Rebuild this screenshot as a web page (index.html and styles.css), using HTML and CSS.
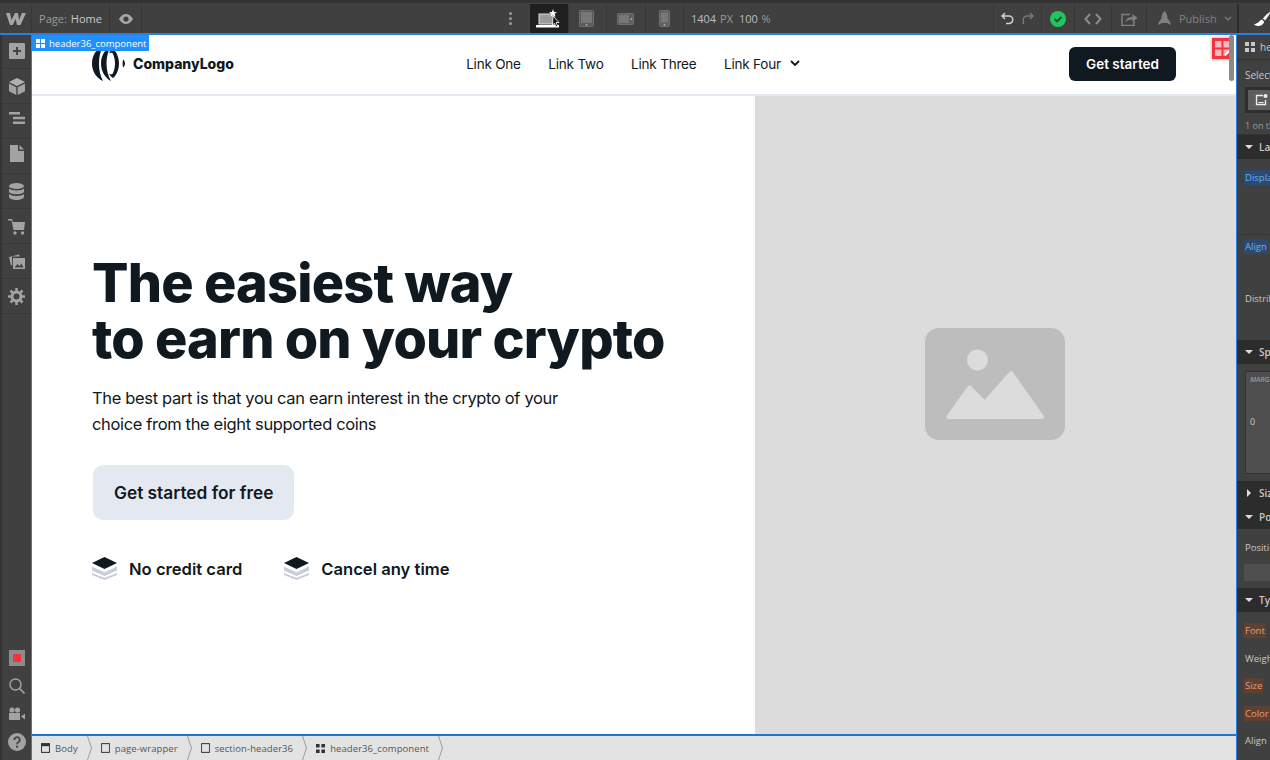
FILE: index.html
```html
<!DOCTYPE html>
<html lang="en">
<head>
  <meta charset="UTF-8" />
  <title>Webflow Designer</title>
  <link rel="stylesheet" href="styles.css">
</head>
<body>
  <div class="app">
    <header class="topbar">
      <div class="tb-cell tb-logo">
        <svg width="20" height="14" viewBox="0 0 20 14"><path d="M0 1h4l1.500 7L9 1h3l1 7 3-7h4l-5.500 12h-3.500l-1.300-6-3 6H4z" fill="#a6a6a6"/></svg>
      </div>
      <div class="tb-cell tb-page"><span class="dim">Page:</span> <span>Home</span></div>
      <div class="tb-cell tb-eye">
        <svg width="14" height="10" viewBox="0 0 14 10"><path fill-rule="evenodd" d="M0 5c2-3.300 4.300-5 7-5s5 1.700 7 5c-2 3.300-4.300 5-7 5S2 8.300 0 5zm7 2.600a2.600 2.600 0 1 0 0-5.200 2.600 2.600 0 0 0 0 5.200z" fill="#a6a6a6"/></svg>
      </div>
      <div class="tb-spacer tb-left"></div>
      <div class="tb-dots"><i></i><i></i><i></i></div>
      <div class="tb-device active">
        <svg width="26" height="20" viewBox="0 0 26 20"><rect x="3" y="5" width="15" height="10" fill="#9a9a9a" stroke="#ddd"/><rect x="0" y="16" width="23" height="2.500" fill="#fff"/><path d="M17 0l1 3h3l-2.400 1.800 1 3L17 6l-2.600 1.800 1-3L13 3h3z" fill="#fff"/><path d="M17 7l6 6.500h-3l1.600 3.500-1.600.7-1.600-3.500-2 2z" fill="#111" stroke="#fff" stroke-width=".8"/></svg>
      </div>
      <div class="tb-device">
        <svg width="16" height="17" viewBox="0 0 16 17"><rect x=".5" y=".5" width="14" height="16" rx="1" fill="#5a5a5a" stroke="#6e6e6e"/><rect x="2" y="2" width="11" height="11" fill="#777"/><circle cx="7.500" cy="14.700" r="1" fill="#aaa"/></svg>
      </div>
      <div class="tb-device">
        <svg width="17" height="12" viewBox="0 0 17 12"><rect x=".5" y=".5" width="16" height="11" rx="1" fill="#5f5f5f" stroke="#6e6e6e"/><rect x="2" y="2" width="10" height="8" fill="#787878"/><circle cx="14.300" cy="6" r="1" fill="#aaa"/></svg>
      </div>
      <div class="tb-device">
        <svg width="11" height="17" viewBox="0 0 11 17"><rect x=".5" y=".5" width="10" height="16" rx="1" fill="#5f5f5f" stroke="#707070"/><rect x="2" y="2.500" width="7" height="10" fill="#787878"/><circle cx="5.500" cy="14.700" r="1" fill="#aaa"/></svg>
      </div>
      <div class="tb-size"><span>1404</span> <span class="dim">PX</span> <span class="tb-zoom">100</span> <span class="dim">%</span></div>
      <div class="tb-spacer"></div>
      <div class="tb-cell tb-undo">
        <svg width="13" height="13" viewBox="0 0 13 13"><path d="M4 1L1 4l3 3M1.500 4H8a3.700 3.700 0 0 1 0 7.500H5" fill="none" stroke="#d0d0d0" stroke-width="1.500"/></svg>
        <svg width="13" height="13" viewBox="0 0 13 13"><path d="M9 1l3 3-3 3M11.500 4H6a3.700 3.700 0 0 0-3.700 3.700V12" fill="none" stroke="#777" stroke-width="1.500"/></svg>
      </div>
      <div class="tb-cell tb-status">
        <svg width="16" height="16" viewBox="0 0 16 16"><circle cx="8" cy="8" r="8" fill="#22c55e"/><path d="M4.500 8l2.500 2.500 4.500-4.500" fill="none" stroke="#14532d" stroke-width="1.800"/></svg>
      </div>
      <div class="tb-cell tb-code">
        <svg width="18" height="12" viewBox="0 0 18 12"><path d="M6 1L1.500 6 6 11M12 1l4.500 5L12 11" fill="none" stroke="#8c8c8c" stroke-width="2"/></svg>
      </div>
      <div class="tb-cell tb-share">
        <svg width="17" height="14" viewBox="0 0 17 14"><path d="M9 2.500H1v11h12V9" fill="none" stroke="#808080" stroke-width="1.500"/><path d="M4.500 10c.5-3.500 3-5 7-5V2l5 4-5 4V7.500c-3 0-5 .7-7 2.500z" fill="#808080"/></svg>
      </div>
      <div class="tb-publish">
        <svg width="15" height="15" viewBox="0 0 15 15"><path d="M7.500 0c2 1.800 3 4.500 3 7.500l3 4V14l-3.500-2h-5L1.500 14v-2.500l3-4c0-3 1-5.700 3-7.500z" fill="#808080"/></svg>
        <span>Publish</span>
        <svg width="8" height="5" viewBox="0 0 8 5"><path d="M1 1l3 3 3-3" fill="none" stroke="#808080" stroke-width="1.200"/></svg>
      </div>
      <div class="tb-brush">
        <svg width="17" height="16" viewBox="0 0 20 16" preserveAspectRatio="none"><path d="M20 0c-3 1.500-7 4.500-9.500 7.500l2.500 2C15.500 7 18.500 3 20 0zM9.500 8.500C7 8.500 6.500 12 0 13.500c4 2.500 10 2 12-2.500z" fill="#fff"/></svg>
      </div>
    </header>

    <div class="workspace">
      <nav class="rail">
        <div class="rail-top">
          <div class="rail-item">
            <svg width="16" height="16" viewBox="0 0 16 16"><rect width="16" height="16" rx="1" fill="#a3a3a3"/><path d="M8 4v8M4 8h8" stroke="#444" stroke-width="2"/></svg>
          </div>
          <div class="rail-item">
            <svg width="16" height="17" viewBox="0 0 16 17"><path d="M8 0l8 4-8 4-8-4z" fill="#b0b0b0"/><path d="M0 5.500l7.300 3.700V17L0 13.200zM16 5.500L8.700 9.200V17l7.300-3.800z" fill="#a3a3a3"/></svg>
          </div>
          <div class="rail-item nudged">
            <svg width="16" height="12" viewBox="0 0 16 12"><path d="M0 0h11v2.500H0zM4 4.700h12v2.500H4zM4 9.500h12V12H4z" fill="#a3a3a3"/></svg>
          </div>
          <div class="rail-item nudged">
            <svg width="14" height="17" viewBox="0 0 14 17"><path d="M0 0h8v6h6v11H0zM9.500 0L14 4.500H9.500z" fill="#a3a3a3"/></svg>
          </div>
          <div class="rail-item">
            <svg width="15" height="17" viewBox="0 0 15 17"><ellipse cx="7.500" cy="3" rx="7.500" ry="3" fill="#a3a3a3"/><path d="M0 5.500c2 2.500 13 2.500 15 0V9c-2 3-13 3-15 0zM0 11c2 2.500 13 2.500 15 0v3c-1 4-14 4-15 0z" fill="#a3a3a3"/></svg>
          </div>
          <div class="rail-item">
            <svg width="18" height="17" viewBox="0 0 18 17"><path d="M0 1h4l1 3h12l-1 8H5.500L3.500 2.500H0z" fill="#a3a3a3"/><circle cx="7" cy="15" r="1.700" fill="#a3a3a3"/><circle cx="14.500" cy="15" r="1.700" fill="#a3a3a3"/></svg>
          </div>
          <div class="rail-item">
            <svg width="17" height="15" viewBox="0 0 17 15"><path d="M1 3l10-2.500.6 2H4L4.200 11 3 11.500z" fill="#a3a3a3"/><rect x="5" y="4" width="12" height="11" fill="#a3a3a3"/><path d="M6.500 13.500l3-3.500 2 2 2-2.500 2 4z" fill="#444"/></svg>
          </div>
          <div class="rail-item">
            <svg width="17" height="17" viewBox="0 0 17 17"><circle cx="8.500" cy="8.500" r="4.500" fill="none" stroke="#a3a3a3" stroke-width="3"/><path d="M8.500 0v3M8.500 14v3M0 8.500h3M14 8.500h3M2.500 2.500l2 2M12.500 12.500l2 2M14.500 2.500l-2 2M4.500 12.500l-2 2" stroke="#a3a3a3" stroke-width="2.500"/></svg>
          </div>
        </div>
        <div class="rail-bottom">
          <div class="rail-item small">
            <svg width="16" height="16" viewBox="0 0 16 16"><rect width="16" height="16" fill="#8c8c8c"/><rect x="4" y="4" width="8" height="8" fill="#f4333f"/></svg>
          </div>
          <div class="rail-item small">
            <svg width="16" height="16" viewBox="0 0 16 16"><circle cx="6.500" cy="6.500" r="5.500" fill="none" stroke="#a3a3a3" stroke-width="1.400"/><path d="M10.500 10.500L15.500 15.500" stroke="#a3a3a3" stroke-width="1.600"/></svg>
          </div>
          <div class="rail-item small">
            <svg width="17" height="14" viewBox="0 0 17 14"><circle cx="4" cy="3" r="2.600" fill="#a3a3a3"/><circle cx="9.500" cy="3" r="2.600" fill="#a3a3a3"/><rect x="1" y="6" width="11" height="7" fill="#a3a3a3"/><path d="M13 9.500L17 6.500v6z" fill="#a3a3a3"/></svg>
          </div>
          <div class="rail-item small">
            <svg width="18" height="18" viewBox="0 0 18 18"><circle cx="9" cy="9" r="9" fill="#a3a3a3"/><path d="M6.300 7a2.700 2.700 0 1 1 4 2.300c-.9.500-1.300.9-1.300 2" fill="none" stroke="#444" stroke-width="1.800"/><rect x="8" y="12.700" width="2" height="2" fill="#444"/></svg>
          </div>
        </div>
      </nav>

      <main class="stage">
        <div class="canvas">
          <div class="sel-label">
            <svg width="9" height="9" viewBox="0 0 9 9"><path d="M0 0h4v4H0zM5 0h4v4H5zM0 5h4v4H0zM5 5h4v4H5z" fill="#fff"/></svg>
            <span>header36_component</span>
          </div>
          <div class="sel-badge">
            <svg width="15" height="15" viewBox="0 0 15 15"><path d="M0 0h6.500v6.500H0zM8.500 0H15v6.500H8.500zM0 8.500h6.500V15H0zM8.500 8.500H15v.5L9 15h-.5z" fill="#ffb9be"/><path d="M10 14.500l4.500-4.500" stroke="#fff" stroke-width="1.800"/></svg>
          </div>
          <div class="scroll-thumb"></div>

          <div class="site-nav">
            <a class="site-logo">
              <svg width="33" height="35" viewBox="0 0 33 35">
                <path d="M11 0C4 3 0 10 0 17.500S4 32 11 35C8 29 7 24 7 17.500S8 6 11 0z" fill="#101820"/>
                <path d="M19 0c-6 3-10 10-10 17.500S13 32 19 35c-3-5-4.500-11-4.500-17.500S16 5 19 0z" fill="#101820"/>
                <path d="M21 3c3.500 2.500 6 8.500 6 14.500S24.500 29.500 21 32c-1.500-.8-3-2.500-4-4.500 1.500 1 2.500 1 3.500.5 1.500-2.500 2.500-6.500 2.500-10.500S22 9.500 20.500 7c-1-.5-2-.5-3.500.5 1-2 2.500-3.700 4-4.500z" fill="#101820"/>
                <path d="M31 13.500c1.300 1 2 2.500 2 4s-.7 3-2 4c-.5-2.500-.5-5.500 0-8z" fill="#101820"/>
              </svg>
              <span>CompanyLogo</span>
            </a>
            <div class="site-links">
              <a>Link One</a>
              <a>Link Two</a>
              <a>Link Three</a>
              <a class="has-caret">Link Four
                <svg width="10" height="7" viewBox="0 0 10 7"><path d="M1 1l4 4 4-4" fill="none" stroke="#101820" stroke-width="1.800"/></svg>
              </a>
            </div>
            <a class="btn-dark">Get started</a>
          </div>

          <section class="hero">
            <div class="hero-copy">
              <h1>The easiest way<br>to earn on your crypto</h1>
              <p>The best part is that you can earn interest in the crypto of your choice from the eight supported coins</p>
              <a class="btn-light">Get started for free</a>
              <ul class="perks">
                <li>
                  <svg width="25" height="23" viewBox="0 0 25 23"><path d="M12.500 0L25 6l-12.500 6L0 6z" fill="#101820"/><path d="M0 9.500l12.500 6 12.500-6v4l-12.500 5.500L0 13.500z" fill="#c6ccd8"/><path d="M0 16l12.500 5 12.500-5v2l-12.500 5L0 18z" fill="#c6ccd8"/></svg>
                  No credit card
                </li>
                <li>
                  <svg width="25" height="23" viewBox="0 0 25 23"><path d="M12.500 0L25 6l-12.500 6L0 6z" fill="#101820"/><path d="M0 9.500l12.500 6 12.500-6v4l-12.500 5.500L0 13.500z" fill="#c6ccd8"/><path d="M0 16l12.500 5 12.500-5v2l-12.500 5L0 18z" fill="#c6ccd8"/></svg>
                  Cancel any time
                </li>
              </ul>
            </div>
            <div class="hero-image">
              <svg width="140" height="112" viewBox="0 0 140 112">
                <rect width="140" height="112" rx="14" fill="#bdbdbd"/>
                <circle cx="52.500" cy="32" r="10.500" fill="#dcdcdc"/>
                <path d="M23.500 89L44.500 59.500 59 74h1.500L86 45l31 44z" fill="#dcdcdc" stroke="#dcdcdc" stroke-width="4" stroke-linejoin="round"/>
              </svg>
            </div>
          </section>
        </div>

        <footer class="crumbs">
          <div class="crumb">
            <svg width="9" height="10" viewBox="0 0 10 10" preserveAspectRatio="none"><rect x=".6" y=".6" width="8.800" height="8.800" fill="none" stroke="#333" stroke-width="1.100"/><path d="M1 1h8v2.200H1z" fill="#333"/></svg>
            Body
          </div>
          <svg class="crumb-sep" width="5" height="24" viewBox="0 0 5 24"><path d="M.5 0L4.500 12 .5 24" fill="none" stroke="#9c9c9c"/></svg>
          <div class="crumb">
            <svg width="9" height="10" viewBox="0 0 10 10" preserveAspectRatio="none"><rect x=".6" y=".6" width="8.800" height="8.800" fill="none" stroke="#444" stroke-width="1.100"/></svg>
            page-wrapper
          </div>
          <svg class="crumb-sep" width="5" height="24" viewBox="0 0 5 24"><path d="M.5 0L4.500 12 .5 24" fill="none" stroke="#9c9c9c"/></svg>
          <div class="crumb">
            <svg width="9" height="10" viewBox="0 0 10 10" preserveAspectRatio="none"><rect x=".6" y=".6" width="8.800" height="8.800" fill="none" stroke="#444" stroke-width="1.100"/></svg>
            section-header36
          </div>
          <svg class="crumb-sep" width="5" height="24" viewBox="0 0 5 24"><path d="M.5 0L4.500 12 .5 24" fill="none" stroke="#9c9c9c"/></svg>
          <div class="crumb">
            <svg width="9" height="9" viewBox="0 0 10 10"><path d="M0 0h4v4H0zM6 0h4v4H6zM0 6h4v4H0zM6 6h4v4H6z" fill="#333"/></svg>
            header36_component
          </div>
          <svg class="crumb-sep" width="5" height="24" viewBox="0 0 5 24"><path d="M.5 0L4.500 12 .5 24" fill="none" stroke="#9c9c9c"/></svg>
        </footer>
      </main>

      <aside class="panel">
        <div class="p-head">
          <svg width="10" height="10" viewBox="0 0 10 10"><path d="M0 0h4v4H0zM6 0h4v4H6zM0 6h4v4H0zM6 6h4v4H6z" fill="#c8c8c8"/></svg>
          <span>header36</span>
        </div>
        <div class="p-select">
          <div class="p-label">Selector</div>
          <div class="p-chip">
            <svg width="13" height="12" viewBox="0 0 13 12"><path d="M8 1.500H1.500v9h9V6" fill="none" stroke="#eee" stroke-width="1.300"/><circle cx="10.500" cy="2" r="2" fill="#eee"/><path d="M3.500 8.500h5" stroke="#eee"/></svg>
          </div>
          <div class="p-note">1 on this page</div>
        </div>
        <div class="p-section"><i class="tri"></i>Layout</div>
        <div class="p-block layout-a"><span class="tag blue">Display</span></div>
        <div class="p-block layout-b"><span class="tag blue">Align</span></div>
        <div class="p-block layout-c"><span class="tag">Distribute</span></div>
        <div class="p-section"><i class="tri"></i>Spacing</div>
        <div class="p-block spacing">
          <div class="box-model"><em>MARGIN</em><span>0</span></div>
        </div>
        <div class="p-section"><i class="tri closed"></i>Size</div>
        <div class="p-section"><i class="tri"></i>Position</div>
        <div class="p-block position">
          <span class="tag">Position</span>
          <div class="p-input"></div>
        </div>
        <div class="p-section"><i class="tri"></i>Typography</div>
        <div class="p-rows">
          <span class="tag orange">Font</span>
          <span class="tag">Weight</span>
          <span class="tag orange">Size</span>
          <span class="tag orange">Color</span>
          <span class="tag">Align</span>
        </div>
      </aside>
    </div>
  </div>
</body>
</html>
```

FILE: styles.css
```css
* {
  box-sizing: border-box;
}
html, body {
  margin: 0;
  height: 100%;
  overflow: hidden;
}
body {
  font-family: Inter, "Liberation Sans", sans-serif;
  background: #404040;
  color: #101820;
}
ul {
  margin: 0;
  padding: 0;
  list-style: none;
}
svg {
  display: block;
  flex: none;
}
.app {
  display: flex;
  flex-direction: column;
  width: 1270px;
  height: 760px;
}

/* top bar */
.topbar {
  display: flex;
  align-items: stretch;
  height: 35px;
  padding-top: 1px;
  background: #404040;
  border-top: 3px solid #333;
  border-bottom: 2px solid #2b7fe0;
  font-size: 11px;
  color: #c8c8c8;
  font-family: "Open Sans", Inter, sans-serif;
  flex: none;
}
.tb-cell {
  display: flex;
  align-items: center;
  justify-content: center;
  border-right: 1px solid #383838;
}
.tb-logo {
  width: 32px;
}
.tb-page {
  width: 78px;
  gap: 4px;
}
.tb-eye {
  width: 32px;
}
.dim {
  color: #9a9a9a;
}
.tb-spacer {
  flex: 1;
}
.tb-left {
  flex: none;
  width: 358px;
}
.tb-dots {
  display: flex;
  flex-direction: column;
  justify-content: center;
  gap: 2px;
  width: 20px;
  margin-right: 10px;
  align-items: center;
}
.tb-dots i {
  width: 3px;
  height: 3px;
  border-radius: 50%;
  background: #999;
}
.tb-device {
  display: flex;
  align-items: center;
  justify-content: center;
  width: 38.500px;
  border-right: 1px solid #383838;
}
.tb-device.active {
  background: #1f1f1f;
}
.tb-size {
  margin: auto 0;
  padding-left: 7px;
  color: #bdbdbd;
  word-spacing: 1px;
}
.tb-zoom {
  margin-left: 2px;
}
.tb-undo {
  width: 49px;
  gap: 7px;
  border-left: 1px solid #383838;
}
.tb-status {
  width: 33px;
}
.tb-code {
  width: 37px;
}
.tb-share {
  width: 35px;
}
.tb-publish {
  display: flex;
  align-items: center;
  gap: 7px;
  width: 90px;
  padding-left: 10px;
  color: #808080;
}
.tb-brush {
  display: flex;
  align-items: center;
  width: 33px;
  padding-left: 15px;
  overflow: hidden;
  border-left: 2px solid #2c2c2c;
}

.workspace {
  display: flex;
  flex: 1;
  min-height: 0;
}

/* left rail */
.rail {
  display: flex;
  flex-direction: column;
  justify-content: space-between;
  width: 32px;
  padding-bottom: 4px;
  background: #404040;
  border-left: 2px solid #333;
  border-right: 1px solid #2b7fe0;
  flex: none;
}
.rail-top {
  margin-top: -1px;
}
.rail-item {
  display: flex;
  align-items: center;
  justify-content: center;
  height: 35px;
  border-bottom: 1px solid #383838;
}
.rail-item.nudged {
  padding-bottom: 6px;
}
.rail-item.small {
  height: 28px;
  border-bottom: 0;
}

/* canvas */
.stage {
  display: flex;
  flex-direction: column;
  flex: 1;
  min-width: 0;
}
.canvas {
  position: relative;
  display: flex;
  flex-direction: column;
  flex: 1;
  min-height: 0;
  background: #fff;
  border-bottom: 2px solid #1f74d4;
}
.sel-label {
  position: absolute;
  top: 0;
  left: 0;
  display: flex;
  align-items: center;
  gap: 4px;
  height: 16px;
  padding: 0 3px 0 4px;
  background: #1e90ff;
  color: #fff;
  font-size: 9.500px;
  font-family: "Open Sans", Inter, sans-serif;
  z-index: 2;
}
.sel-badge {
  position: absolute;
  top: 3px;
  right: 4px;
  display: flex;
  align-items: center;
  justify-content: center;
  width: 20px;
  height: 21px;
  background: #f4333f;
  box-shadow: 0 0 3px rgba(120, 0, 0, 0.5);
  z-index: 2;
}
.scroll-thumb {
  position: absolute;
  top: 0;
  right: 2px;
  width: 5px;
  height: 46px;
  border-radius: 3px;
  background: #8a8a8a;
  z-index: 3;
}
.site-nav {
  display: grid;
  grid-template-columns: 1fr auto 1fr;
  align-items: center;
  height: 61px;
  padding: 0 60px 2px;
  border-bottom: 2px solid #e4e8f0;
  flex: none;
}
.site-logo {
  display: flex;
  align-items: center;
  gap: 8px;
  font-size: 14px;
  font-weight: 800;
}
.site-links {
  display: flex;
  align-items: center;
  gap: 27.500px;
  margin-left: -2px;
  font-size: 13.500px;
  letter-spacing: -0.2px;
  font-weight: 400;
}
.has-caret {
  display: flex;
  align-items: center;
  gap: 9px;
}
.btn-dark {
  justify-self: end;
  padding: 8px 17px;
  background: #101820;
  color: #fff;
  border-radius: 6px;
  font-size: 13.500px;
  font-weight: 600;
  line-height: 18px;
}
.hero {
  display: grid;
  grid-template-columns: 723px 1fr;
  flex: 1;
  min-height: 0;
}
.hero-copy {
  display: flex;
  flex-direction: column;
  justify-content: center;
  align-items: flex-start;
  padding: 5px 0 0 60px;
}
h1 {
  margin: 0;
  font-size: 54px;
  font-weight: 800;
  line-height: 56px;
  letter-spacing: -0.8px;
}
.hero-copy p {
  width: 500px;
  margin: 18px 0 0;
  font-size: 16.500px;
  letter-spacing: -0.35px;
  line-height: 26px;
}
.btn-light {
  margin: 28px 0 0 1px;
  padding: 15.500px 21px;
  background: #e4e8f0;
  border-radius: 10px;
  font-size: 17.300px;
  font-weight: 600;
  line-height: 24px;
}
.perks {
  display: flex;
  gap: 42px;
  margin-top: 37px;
  font-size: 16.600px;
  font-weight: 600;
}
.perks li {
  display: flex;
  align-items: center;
  gap: 12px;
}
.hero-image {
  display: flex;
  align-items: center;
  justify-content: center;
  padding: 0 2px 63px 0;
  background: #dcdcdc;
}

/* breadcrumb */
.crumbs {
  display: flex;
  align-items: center;
  height: 24px;
  padding-left: 9px;
  background: #e3e3e3;
  font-size: 9.500px;
  font-family: "Open Sans", Inter, sans-serif;
  letter-spacing: 0.08px;
  color: #555;
  flex: none;
}
.crumb {
  display: flex;
  align-items: center;
  gap: 5px;
}
.crumb-sep {
  margin: 0 9px;
}

/* right panel */
.panel {
  width: 34px;
  overflow: hidden;
  background: #404040;
  border-left: 1px solid #2b7fe0;
  font-family: "Open Sans", Inter, sans-serif;
  font-size: 10px;
  color: #c8c8c8;
  white-space: nowrap;
  flex: none;
}
.p-head {
  display: flex;
  align-items: center;
  gap: 5px;
  height: 25px;
  padding-left: 8px;
  border-bottom: 1px solid #333;
}
.p-select {
  height: 75px;
  padding: 8px 0 0 8px;
  border-bottom: 1px solid #333;
}
.p-chip {
  display: flex;
  align-items: center;
  justify-content: center;
  width: 32px;
  height: 26px;
  margin-top: 5px;
  background: #5e5e5e;
  border: 3px solid #2e2e2e;
}
.p-note {
  margin-top: 6px;
  font-size: 9px;
  color: #9a9a9a;
}
.p-section {
  display: flex;
  align-items: center;
  gap: 6px;
  height: 24px;
  padding-left: 8px;
  background: #2c2c2c;
  font-weight: 600;
}
.tri {
  width: 0;
  height: 0;
  border-left: 4px solid transparent;
  border-right: 4px solid transparent;
  border-top: 4px solid #ddd;
}
.tri.closed {
  margin: 0 2px;
  border: 0;
  border-top: 4px solid transparent;
  border-bottom: 4px solid transparent;
  border-left: 4px solid #ddd;
}
.p-block {
  padding: 11px 0 0 7px;
  border-bottom: 1px solid #383838;
}
.layout-a {
  height: 76px;
}
.layout-b {
  height: 51px;
  padding-top: 4px;
  border: 0;
}
.layout-c {
  height: 54px;
  padding-top: 5px;
  border: 0;
}
.tag {
  padding: 1px 1px;
  font-size: 9.500px;
}
.tag.blue {
  background: #2c4a70;
  color: #69aef5;
}
.tag.orange {
  background: #5c4234;
  color: #ed9a68;
}
.spacing {
  height: 117px;
  padding: 7px 0 0 8px;
  border: 0;
}
.box-model {
  display: flex;
  flex-direction: column;
  height: 103px;
  padding: 3px 0 0 4px;
  background: #4e4e4e;
  border: 1px solid #333;
  border-right: 0;
}
.box-model em {
  font-size: 7px;
  color: #999;
  font-weight: 600;
}
.box-model span {
  margin-top: 31px;
  font-size: 9px;
}
.position {
  height: 59px;
  padding: 11px 0 0 7px;
  border: 0;
}
.p-input {
  height: 17px;
  margin-top: 10px;
  background: #4e4e4e;
}
.p-rows {
  display: flex;
  flex-direction: column;
  align-items: flex-start;
  gap: 12.500px;
  padding: 11px 0 0 7px;
}
```
